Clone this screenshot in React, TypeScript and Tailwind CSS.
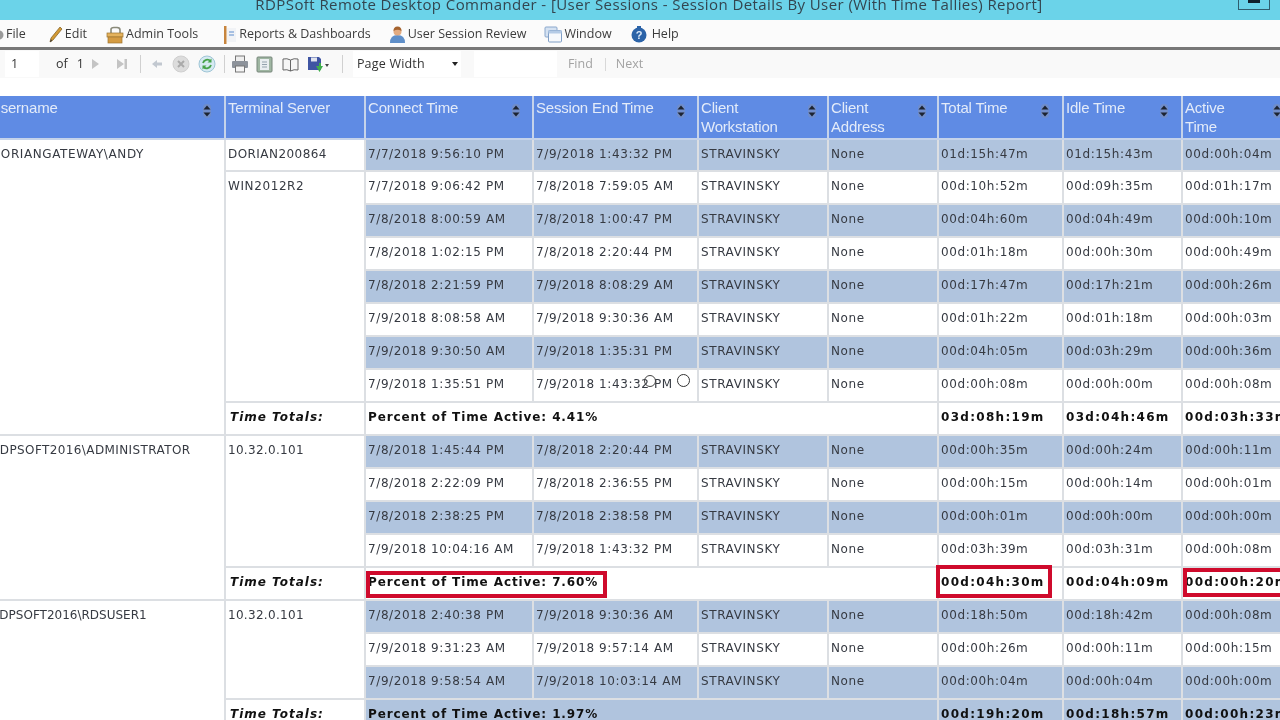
import React from "react";

type Row = { start: string; end: string; total: string; idle: string; active: string };

const SortIcon = () => (
  <svg width="10" height="16" viewBox="0 0 10 16" className="shrink-0">
    <rect x="1" y="1" width="8" height="14" rx="4" fill="#7d8fb5" opacity="0.55" />
    <path d="M5 2.5 L8.5 6.5 H1.5 Z" fill="#1c2330" />
    <path d="M5 13.5 L8.5 9.5 H1.5 Z" fill="#1c2330" />
  </svg>
);

const GearIcon = () => (
  <svg width="4" height="14" viewBox="0 0 4 14">
    <circle cx="-1" cy="7" r="4.5" fill="#9a9a9a" />
  </svg>
);

const PencilIcon = () => (
  <svg width="14" height="18" viewBox="0 0 14 18">
    <path d="M11 1 L13 3 L4 14 L1 16 L2 12 Z" fill="#d39a35" stroke="#7b5a20" strokeWidth="0.7" />
    <path d="M1 16 L3 15 L2 13 Z" fill="#333" />
  </svg>
);

const ToolboxIcon = () => (
  <svg width="18" height="18" viewBox="0 0 18 18">
    <path d="M5 7 V3.5 Q5 1.5 8 1.5 H11 Q14 1.5 14 4 V7" fill="none" stroke="#8a8a7a" strokeWidth="1.6" />
    <rect x="1" y="7" width="16" height="4" fill="#e4b25c" stroke="#9d7430" strokeWidth="0.7" />
    <rect x="2" y="11" width="14" height="6" fill="#d49b42" stroke="#9d7430" strokeWidth="0.7" />
  </svg>
);

const ReportIcon = () => (
  <svg width="14" height="20" viewBox="0 0 14 20">
    <rect x="1" y="1" width="2.5" height="18" fill="#c7853e" />
    <rect x="4" y="3" width="9" height="14" fill="#f1f3f6" />
    <path d="M6 7 H11 M6 10 H11" stroke="#8eb0dc" strokeWidth="1.4" />
  </svg>
);

const UserIcon = () => (
  <svg width="17" height="19" viewBox="0 0 17 19">
    <path d="M1 18 Q1 10 8.5 10 Q16 10 16 18 Z" fill="#5f8fc9" />
    <circle cx="8.5" cy="6.5" r="4" fill="#e3ab80" />
    <path d="M4.5 6 Q4.5 1.5 8.5 1.5 Q12.5 1.5 12.5 6 Q8.5 3.5 4.5 6 Z" fill="#a5632e" />
  </svg>
);

const WindowIcon = () => (
  <svg width="18" height="17" viewBox="0 0 18 17">
    <rect x="1" y="1" width="12" height="10" rx="1" fill="#d5e2f2" stroke="#8aa7cc" />
    <rect x="4.5" y="4.5" width="13" height="11.5" rx="1" fill="#f7f9fc" stroke="#7f9ec6" />
    <rect x="4.5" y="4.5" width="13" height="3" fill="#b5cbe6" />
  </svg>
);

const HelpIcon = () => (
  <svg width="16" height="17" viewBox="0 0 16 17" className="mr-[3px]">
    <circle cx="8" cy="9" r="7.5" fill="#2b63a8" />
    <rect x="6" y="0" width="4" height="2" fill="#2b63a8" />
    <text x="8" y="13" textAnchor="middle" fontSize="11" fontWeight="700" fill="#dceafa" fontFamily="Liberation Sans">?</text>
  </svg>
);

const MenuItem = ({ icon, label, className }: { icon: React.ReactNode; label: string; className: string }) => (
  <div className={`flex items-center ${className}`}>
    {icon}
    <span className="ml-[2px]">{label}</span>
  </div>
);

const Sep = ({ className }: { className: string }) => <div className={`w-px h-[18px] bg-[#d0d0d0] ${className}`} />;

const Toolbar = () => (
  <div className="h-[28px] flex items-center bg-[#f9f9f9] font-['Open_Sans',sans-serif] text-[12.5px] text-[#333] relative">
    <div className="ml-[5px] w-[34px] h-[26px] bg-white pl-[6px] leading-[26px]">1</div>
    <span className="ml-[17px]">of</span>
    <span className="ml-[9px]">1</span>
    <svg width="36" height="14" viewBox="0 0 36 14" className="ml-[7px]">
      <path d="M1 2 L8 7 L1 12 Z" fill="#c4c4c4" />
      <path d="M26 2 L33 7 L26 12 Z M33.5 2 H36 V12 H33.5 Z" fill="#c4c4c4" />
    </svg>
    <Sep className="ml-[13px]" />
    <svg width="10" height="10" viewBox="0 0 10 10" className="ml-[11px]">
      <path d="M0 5 L5 1 V3.5 H10 V6.5 H5 V9 Z" fill="#c2c8d0" />
    </svg>
    <svg width="18" height="18" viewBox="0 0 18 18" className="ml-[10px]">
      <circle cx="9" cy="9" r="8" fill="#dcdcdc" stroke="#cfcfcf" />
      <path d="M6 6 L12 12 M12 6 L6 12" stroke="#aaa" strokeWidth="2" />
    </svg>
    <svg width="18" height="18" viewBox="0 0 18 18" className="ml-[8px]">
      <circle cx="9" cy="9" r="8" fill="#d6eaf2" stroke="#9fc5d6" />
      <path d="M5 8 A4.5 4.5 0 0 1 12.5 6 M13 10 A4.5 4.5 0 0 1 5.5 12" fill="none" stroke="#47a34a" strokeWidth="1.8" />
      <path d="M13.5 3.5 V7.5 H9.5 Z M4.5 14.5 V10.5 H8.5 Z" fill="#47a34a" />
    </svg>
    <Sep className="ml-[8px]" />
    <svg width="18" height="18" viewBox="0 0 18 18" className="ml-[6px]">
      <rect x="4.5" y="1" width="9" height="6" fill="#eee" stroke="#777" />
      <rect x="1" y="6" width="16" height="7" rx="1" fill="#8d939b" />
      <rect x="4.5" y="11" width="9" height="6" fill="#f4f4f4" stroke="#777" />
    </svg>
    <svg width="17" height="17" viewBox="0 0 17 17" className="ml-[7px]">
      <rect x="1" y="1" width="15" height="15" rx="1" fill="#9fb6a2" stroke="#76867a" />
      <rect x="4" y="3" width="9" height="11" fill="#e9eef0" />
      <path d="M6 6 H11 M6 8.5 H11 M6 11 H11" stroke="#93a2ad" />
    </svg>
    <svg width="17" height="15" viewBox="0 0 17 15" className="ml-[9px]">
      <path d="M1 2 Q5 1 8.5 3 V14 Q5 12 1 13 Z M8.5 3 Q12 1 16 2 V13 Q12 12 8.5 14" fill="#f5f5f5" stroke="#666" />
    </svg>
    <svg width="22" height="17" viewBox="0 0 22 17" className="ml-[8px]">
      <path d="M1 1 H12 L14 3 V14 H1 Z" fill="#3f55a3" />
      <rect x="4" y="1.5" width="6" height="4" fill="#dfe3ee" />
      <path d="M9 10 H12 V7 H14 V10 H16 L12.5 16 Z" fill="#3fae4a" />
      <path d="M18 8 H22 L20 11 Z" fill="#444" />
    </svg>
    <Sep className="ml-[13px]" />
    <div className="ml-[10px] w-[108px] h-[26px] bg-white pl-[4px] leading-[26px] flex items-center justify-between pr-[3px] tracking-[0.2px]">
      <span>Page Width</span>
      <svg width="6" height="4" viewBox="0 0 6 4"><path d="M0 0 H6 L3 4 Z" fill="#222" /></svg>
    </div>
    <div className="ml-[13px] w-[83px] h-[26px] bg-white" />
    <span className="ml-[11px] text-[#a3a3a3]">Find</span>
    <div className="ml-[12px] w-px h-[13px] bg-[#d8d8d8]" />
    <span className="ml-[10px] text-[#a3a3a3]">Next</span>
  </div>
);

const Th = ({ label, pad, sort = true }: { label: React.ReactNode; pad: string; sort?: boolean }) => (
  <th className="h-[44px] p-0 align-top border-r-2 border-b-2 border-[#c5d3ea] bg-[#5f8be4] font-normal">
    <div className={`flex justify-between pl-[2px] pt-[2px] text-left text-[15px] leading-[19px] tracking-[-0.2px] text-[#e3ebf9] font-['Liberation_Sans',sans-serif] ${pad}`}>
      <span>{label}</span>
      {sort && <span className="pt-[5px]"><SortIcon /></span>}
    </div>
  </th>
);

const cell = "h-[33px] p-0 pl-[2px] pb-[3px] align-middle border-r-2 border-b-2 border-[#dcdfe3] whitespace-nowrap";
const groupCell = "h-[33px] p-0 pl-[2px] pt-[5px] align-top border-r-2 border-b-2 border-[#dcdfe3] whitespace-nowrap";

const SessionCells = ({ row, blue, short = false }: { row: Row; blue: boolean; short?: boolean }) => {
  const bg = blue ? "bg-[#b0c4de]" : "bg-white";
  const c = `${cell} ${bg} ${short ? "!h-[32px]" : ""}`;
  return (
    <>
      <td className={c}>{row.start}</td>
      <td className={c}>{row.end}</td>
      <td className={c}>STRAVINSKY</td>
      <td className={c}>None</td>
      <td className={c}>{row.total}</td>
      <td className={c}>{row.idle}</td>
      <td className={c}>{row.active}</td>
    </>
  );
};

const RedBox = ({ className }: { className: string }) => (
  <div className={`absolute border-[4px] border-[#cf0a2c] pointer-events-none ${className}`} />
);

const TotalsRow = ({ percent, total, idle, active, blue = false, boxed = false }: { percent: string; total: string; idle: string; active: string; blue?: boolean; boxed?: boolean }) => {
  const bg = blue ? "bg-[#b0c4de]" : "bg-white";
  const b = `${cell} ${bg} font-bold text-[#111] relative`;
  return (
    <>
      <td className={`${cell} bg-white font-bold italic text-[#111] tracking-[1px] !pl-[4px]`}>Time Totals:</td>
      <td colSpan={4} className={`${b} tracking-[0.9px]`}>
        Percent of Time Active: {percent}
        {boxed && <RedBox className="left-0 top-[3px] w-[241px] h-[27px]" />}
      </td>
      <td className={`${b} tracking-[1.3px]`}>
        {total}
        {boxed && <RedBox className="-left-[3px] -top-[3px] w-[116px] h-[33px]" />}
      </td>
      <td className={`${b} tracking-[1.3px]`}>{idle}</td>
      <td className={`${b} tracking-[1.3px]`}>
        {active}
        {boxed && <RedBox className="left-0 top-0 w-[110px] h-[29px]" />}
      </td>
    </>
  );
};

const r = (start: string, end: string, total: string, idle: string, active: string): Row => ({ start, end, total, idle, active });

const gateway = [
  r("7/8/2018 8:00:59 AM", "7/8/2018 1:00:47 PM", "00d:04h:60m", "00d:04h:49m", "00d:00h:10m"),
  r("7/8/2018 1:02:15 PM", "7/8/2018 2:20:44 PM", "00d:01h:18m", "00d:00h:30m", "00d:00h:49m"),
  r("7/8/2018 2:21:59 PM", "7/9/2018 8:08:29 AM", "00d:17h:47m", "00d:17h:21m", "00d:00h:26m"),
  r("7/9/2018 8:08:58 AM", "7/9/2018 9:30:36 AM", "00d:01h:22m", "00d:01h:18m", "00d:00h:03m"),
  r("7/9/2018 9:30:50 AM", "7/9/2018 1:35:31 PM", "00d:04h:05m", "00d:03h:29m", "00d:00h:36m"),
  r("7/9/2018 1:35:51 PM", "7/9/2018 1:43:32 PM", "00d:00h:08m", "00d:00h:00m", "00d:00h:08m"),
];

const admin = [
  r("7/8/2018 2:22:09 PM", "7/8/2018 2:36:55 PM", "00d:00h:15m", "00d:00h:14m", "00d:00h:01m"),
  r("7/8/2018 2:38:25 PM", "7/8/2018 2:38:58 PM", "00d:00h:01m", "00d:00h:00m", "00d:00h:00m"),
  r("7/9/2018 10:04:16 AM", "7/9/2018 1:43:32 PM", "00d:03h:39m", "00d:03h:31m", "00d:00h:08m"),
];

const rdsuser = [
  r("7/9/2018 9:31:23 AM", "7/9/2018 9:57:14 AM", "00d:00h:26m", "00d:00h:11m", "00d:00h:15m"),
  r("7/9/2018 9:58:54 AM", "7/9/2018 10:03:14 AM", "00d:00h:04m", "00d:00h:04m", "00d:00h:00m"),
];

export default function App() {
  return (
    <div className="relative w-[1280px] h-[720px] overflow-hidden bg-white blur-[0.5px]">
      {/* title bar */}
      <div className="relative h-[20px] bg-[#6bd3e9] text-center font-['Open_Sans',sans-serif] text-[15px] leading-[9px] tracking-[0.42px] text-[#33454f]">
        <span className="relative left-[9px]">RDPSoft Remote Desktop Commander - [User Sessions - Session Details By User (With Time Tallies) Report]</span>
        <div className="absolute left-[1238px] top-0 w-[32px] h-[10px] border border-t-0 border-[#2f5d6e]">
          <div className="ml-[9px] w-[12px] h-[3px] bg-[#10202c]" />
        </div>
      </div>

      {/* menu bar */}
      <div className="h-[30px] pt-[2px] flex items-center bg-[#fbfbfb] font-['Open_Sans',sans-serif] text-[12.5px] text-[#3c3c3c] border-b-[3px] border-[#777]">
        <MenuItem icon={<GearIcon />} label="File" className="" />
        <MenuItem icon={<PencilIcon />} label="Edit" className="ml-[23px]" />
        <MenuItem icon={<ToolboxIcon />} label="Admin Tools" className="ml-[19px]" />
        <MenuItem icon={<ReportIcon />} label="Reports & Dashboards" className="ml-[25px]" />
        <MenuItem icon={<UserIcon />} label="User Session Review" className="ml-[18px]" />
        <MenuItem icon={<WindowIcon />} label="Window" className="ml-[18px]" />
        <MenuItem icon={<HelpIcon />} label="Help" className="ml-[19px]" />
      </div>

      <Toolbar />

      {/* report table */}
      <div className="mt-[18px]">
        <table className="table-fixed border-separate border-spacing-0 -ml-[11px] w-[1314px] font-['DejaVu_Sans',sans-serif] text-[12px] tracking-[0.6px] text-[#363a42]">
          <colgroup>
            <col className="w-[237px]" />
            <col className="w-[140px]" />
            <col className="w-[168px]" />
            <col className="w-[165px]" />
            <col className="w-[130px]" />
            <col className="w-[110px]" />
            <col className="w-[125px]" />
            <col className="w-[119px]" />
            <col className="w-[120px]" />
          </colgroup>
          <thead>
            <tr>
              <Th label="Username" pad="pr-[12px] !pl-[1px]" />
              <Th label="Terminal Server" pad="pr-[10px]" sort={false} />
              <Th label="Connect Time" pad="pr-[11px]" />
              <Th label="Session End Time" pad="pr-[11px]" />
              <Th label={<>Client<br />Workstation</>} pad="pr-[10px]" />
              <Th label={<>Client<br />Address</>} pad="pr-[10px]" />
              <Th label="Total Time" pad="pr-[12px]" />
              <Th label="Idle Time" pad="pr-[12px]" />
              <Th label={<>Active<br />Time</>} pad="pr-[19px]" />
            </tr>
          </thead>
          <tbody>
            <tr>
              <td rowSpan={9} className={groupCell}>DORIANGATEWAY\ANDY</td>
              <td className={`${groupCell} !h-[32px] bg-white tracking-[0.45px]`}>DORIAN200864</td>
              <SessionCells blue short row={r("7/7/2018 9:56:10 PM", "7/9/2018 1:43:32 PM", "01d:15h:47m", "01d:15h:43m", "00d:00h:04m")} />
            </tr>
            <tr>
              <td rowSpan={7} className={groupCell}>WIN2012R2</td>
              <SessionCells blue={false} row={r("7/7/2018 9:06:42 PM", "7/8/2018 7:59:05 AM", "00d:10h:52m", "00d:09h:35m", "00d:01h:17m")} />
            </tr>
            {gateway.map((row, i) => (
              <tr key={row.start}>
                <SessionCells row={row} blue={i % 2 === 0} />
              </tr>
            ))}
            <tr>
              <TotalsRow percent="4.41%" total="03d:08h:19m" idle="03d:04h:46m" active="00d:03h:33m" />
            </tr>
            <tr>
              <td rowSpan={5} className={`${groupCell} tracking-[0.4px]`}>RDPSOFT2016\ADMINISTRATOR</td>
              <td rowSpan={4} className={`${groupCell} tracking-[0.3px]`}>10.32.0.101</td>
              <SessionCells blue row={r("7/8/2018 1:45:44 PM", "7/8/2018 2:20:44 PM", "00d:00h:35m", "00d:00h:24m", "00d:00h:11m")} />
            </tr>
            {admin.map((row, i) => (
              <tr key={row.start}>
                <SessionCells row={row} blue={i % 2 === 1} />
              </tr>
            ))}
            <tr>
              <TotalsRow boxed percent="7.60%" total="00d:04h:30m" idle="00d:04h:09m" active="00d:00h:20m" />
            </tr>
            <tr>
              <td rowSpan={4} className={`${groupCell} tracking-[0px]`}>RDPSOFT2016\RDSUSER1</td>
              <td rowSpan={3} className={`${groupCell} tracking-[0.3px]`}>10.32.0.101</td>
              <SessionCells blue row={r("7/8/2018 2:40:38 PM", "7/9/2018 9:30:36 AM", "00d:18h:50m", "00d:18h:42m", "00d:00h:08m")} />
            </tr>
            {rdsuser.map((row, i) => (
              <tr key={row.start}>
                <SessionCells row={row} blue={i % 2 === 1} />
              </tr>
            ))}
            <tr>
              <TotalsRow blue percent="1.97%" total="00d:19h:20m" idle="00d:18h:57m" active="00d:00h:23m" />
            </tr>
          </tbody>
        </table>
      </div>

      {/* mouse click rings from the recording */}
      <div className="absolute left-[644px] top-[375px] w-[12px] h-[12px] rounded-full border border-[#444]" />
      <div className="absolute left-[677px] top-[374px] w-[13px] h-[13px] rounded-full border border-[#333]" />
    </div>
  );
}
